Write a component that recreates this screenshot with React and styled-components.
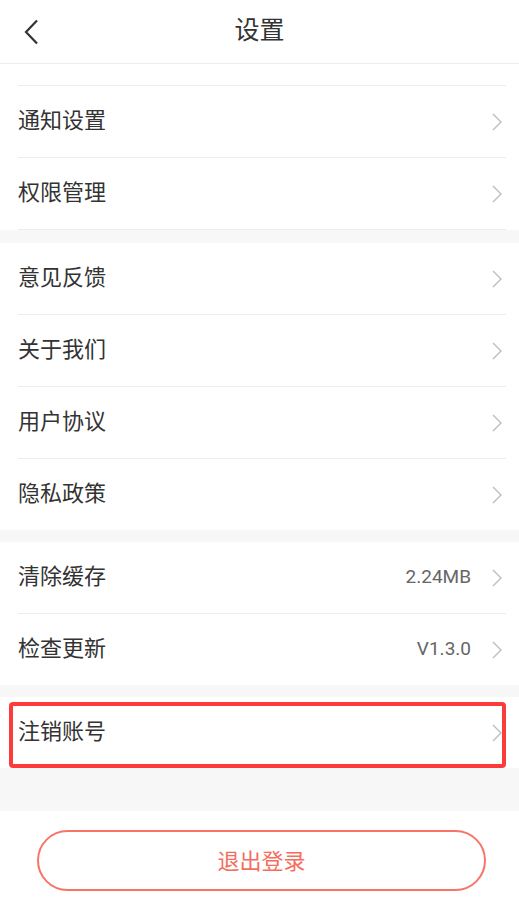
import React from 'react';
import styled, { createGlobalStyle } from 'styled-components';

const GlobalStyle = createGlobalStyle`
  html, body {
    margin: 0;
    padding: 0;
    background: #f7f7f7;
  }
  body {
    font-family: Roboto, "Noto Sans CJK SC", sans-serif;
    color: #333;
  }
`;

const Page = styled.div`
  width: 519px;
  min-height: 903px;
  background: #f7f7f7;
  display: flex;
  flex-direction: column;
`;

const Header = styled.header`
  height: 63px;
  border-bottom: 1px solid #ececec;
  background: #fff;
  display: flex;
  align-items: center;
  justify-content: center;
  position: relative;
`;

const BackButton = styled.button`
  position: absolute;
  left: 22px;
  top: 18px;
  width: 18px;
  height: 28px;
  padding: 0;
  border: none;
  background: none;
  display: flex;
  align-items: center;
  justify-content: center;
`;

const Title = styled.h1`
  margin: 0 0 7px;
  font-size: 25px;
  font-weight: 400;
  color: #333;
`;

const Section = styled.section`
  background: #fff;
  margin-top: ${p => p.$gap || 0}px;
`;

const Spacer = styled.div`
  height: 21px;
  margin: 0 13px 0 18px;
  border-bottom: 1px solid #ececec;
`;

const Row = styled.div`
  position: relative;
  padding: 0 13px 0 18px;
  ${p => p.$highlight && `
    &::after {
      content: '';
      position: absolute;
      left: 9px;
      right: 13px;
      top: 5px;
      bottom: 0;
      border: 4px solid #fc3b3b;
      border-radius: 4px;
      pointer-events: none;
    }
  `}
`;

const RowInner = styled.div`
  height: 71px;
  display: flex;
  align-items: center;
  border-bottom: ${p => (p.$last ? 'none' : '1px solid #ececec')};
`;

const Label = styled.span`
  flex: 1;
  font-size: 22px;
  color: #333;
  margin-bottom: 7px;
`;

const Value = styled.span`
  font-size: 19px;
  color: #666;
  margin: 0 21px 3px 0;
`;

const Arrow = styled.svg`
  width: 10px;
  height: 18px;
  margin-right: 4px;
  flex-shrink: 0;
`;

const Footer = styled.div`
  margin-top: 43px;
  background: #fff;
  flex: 1;
  padding: 19px 33px 20px 37px;
`;

const LogoutButton = styled.button`
  width: 100%;
  height: 61px;
  border: 2.5px solid #f87468;
  border-radius: 31px;
  background: #fff;
  color: #f56d5e;
  font-family: Roboto, "Noto Sans CJK SC", sans-serif;
  font-size: 22px;
  padding: 0 0 4px;
`;

const Chevron = () => (
  <Arrow viewBox="0 0 10 18">
    <polyline points="1,1 9,9 1,17" fill="none" stroke="#bdbdbd" strokeWidth="1.4" />
  </Arrow>
);

const SettingRow = ({ label, value, last, highlight }) => (
  <Row $highlight={highlight}>
    <RowInner $last={last}>
      <Label>{label}</Label>
      {value && <Value>{value}</Value>}
      <Chevron />
    </RowInner>
  </Row>
);

const App = () => (
  <Page>
    <GlobalStyle />
    <Header>
      <BackButton>
        <svg width="16" height="26" viewBox="0 0 16 26">
          <polyline points="14,1.5 3,13 14,24.5" fill="none" stroke="#333" strokeWidth="2.2" />
        </svg>
      </BackButton>
      <Title>设置</Title>
    </Header>

    <Section>
      <Spacer />
      <SettingRow label="通知设置" />
      <SettingRow label="权限管理" />
    </Section>

    <Section $gap={13}>
      <SettingRow label="意见反馈" />
      <SettingRow label="关于我们" />
      <SettingRow label="用户协议" />
      <SettingRow label="隐私政策" last />
    </Section>

    <Section $gap={12}>
      <SettingRow label="清除缓存" value="2.24MB" />
      <SettingRow label="检查更新" value="V1.3.0" last />
    </Section>

    <Section $gap={12}>
      <SettingRow label="注销账号" last highlight />
    </Section>

    <Footer>
      <LogoutButton>退出登录</LogoutButton>
    </Footer>
  </Page>
);

export default App;
